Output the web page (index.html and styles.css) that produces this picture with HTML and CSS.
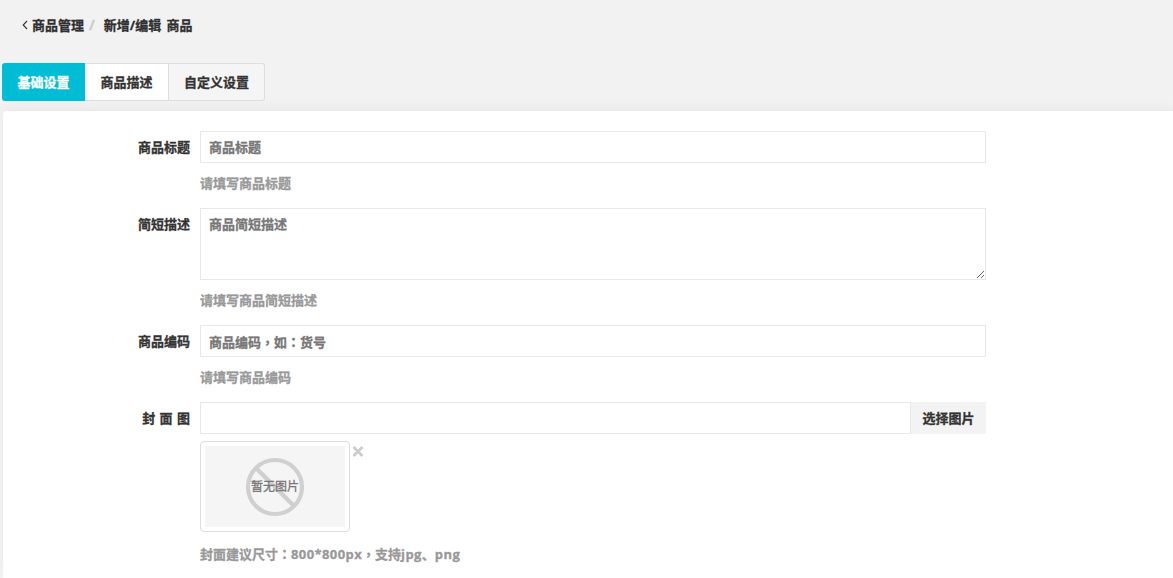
FILE: index.html
```html
<!DOCTYPE html>
<html lang="zh-CN">
<head>
<meta charset="utf-8">
<title>新增/编辑 商品</title>
<link rel="stylesheet" href="styles.css">
</head>
<body>
<nav class="crumbs">
  <svg class="back" width="6" height="10" viewBox="0 0 6 10"><path d="M5 1 1.2 5 5 9" fill="none" stroke="#333" stroke-width="1.1"/></svg>
  <span class="crumb">商品管理</span>
  <span class="sep">/</span>
  <span class="crumb">新增/编辑 商品</span>
</nav>
<div class="tabs">
  <a class="tab active">基础设置</a>
  <a class="tab white">商品描述</a>
  <a class="tab last">自定义设置</a>
</div>
<main class="panel">
  <div class="row">
    <label class="label">商品标题</label>
    <div class="field">
      <input class="control" placeholder="商品标题">
      <p class="hint">请填写商品标题</p>
    </div>
  </div>
  <div class="row">
    <label class="label">简短描述</label>
    <div class="field">
      <textarea class="control area" placeholder="商品简短描述"></textarea>
      <p class="hint">请填写商品简短描述</p>
    </div>
  </div>
  <div class="row">
    <label class="label">商品编码</label>
    <div class="field">
      <input class="control tc" lang="zh-TW" placeholder="商品编码，如：货号">
      <p class="hint">请填写商品编码</p>
    </div>
  </div>
  <div class="row">
    <label class="label spaced">封 面 图</label>
    <div class="field">
      <div class="group">
        <input class="control grow">
        <button class="pick" type="button">选择图片</button>
      </div>
      <div class="thumb-line">
        <div class="thumb">
          <div class="placeholder">
            <svg class="no" width="60" height="60" viewBox="0 0 60 60"><circle cx="30" cy="30" r="27" fill="none" stroke="#d0d0d0" stroke-width="4.2"/><path d="M11 11 49 49" stroke="#d0d0d0" stroke-width="4.2"/></svg>
            <span class="none-text">暂无图片</span>
          </div>
        </div>
        <svg class="remove" width="12" height="11" viewBox="0 0 12 11"><path d="M1.5 1 10.5 10M10.5 1 1.5 10" stroke="#ccc" stroke-width="2.6"/></svg>
      </div>
      <p class="hint cover">封面建议尺寸<span class="tc" lang="zh-TW">：</span><span class="latin">800*800px</span><span class="tc" lang="zh-TW">，</span>支持<span class="latin">jpg</span>、<span class="latin">png</span></p>
    </div>
  </div>
</main>
</body>
</html>
```
FILE: styles.css
```css
* { box-sizing: border-box; }
html, body { margin: 0; height: 578px; overflow: hidden; }
body {
  background: #f2f2f2;
  font: bold 13px/18px "Open Sans", "Noto Sans CJK SC", "Liberation Sans", sans-serif;
  color: #333;
  -webkit-text-stroke: .3px;
}
.crumbs {
  display: flex;
  align-items: center;
  height: 18px;
  margin: 16px 0 0 22px;
}
.back { margin-right: 4px; }
.crumb { color: #2f2f2f; word-spacing: 2px; }
.sep { color: #ccc; margin: 0 9px 0 5px; font-size: 14px; }
.tabs {
  display: flex;
  width: 263px;
  height: 38px;
  margin: 29px 0 0 2px;
}
.tab {
  display: flex;
  align-items: center;
  justify-content: center;
  border: 1px solid #ddd;
  border-left: 0;
  background: #fff;
  color: #333;
}
.active {
  width: 83px;
  background: #00bcd4;
  border: 0;
  border-radius: 3px 0 0 3px;
  color: #fff;
}
.white { width: 84px; }
.last {
  width: 96px;
  background: #f5f5f5;
  border-radius: 0 3px 3px 0;
}
.panel {
  margin: 10px 0 0 3px;
  height: 467px;
  padding-top: 20px;
  background: #fff;
  border-radius: 4px 0 0 0;
  box-shadow: 0 -5px 10px rgba(0, 0, 0, .035);
}
.row { display: flex; }
.label {
  width: 197px;
  padding-right: 10px;
  text-align: right;
  line-height: 32px;
  color: #333;
  flex: none;
}
.spaced { word-spacing: 1px; }
.field { width: 786px; flex: none; }
.control {
  display: block;
  width: 100%;
  height: 32px;
  border: 1px solid #e8e8e8;
  padding: 0 8px;
  background: #fff;
  font: inherit;
  color: #333;
  outline: 0;
  border-radius: 0;
}
.control::placeholder { color: #777; opacity: 1; }
.area { height: 72px; padding: 6px 8px; resize: vertical; }
.tc { font-family: "Noto Sans CJK TC", sans-serif; }
.latin { letter-spacing: .4px; }
.hint {
  margin: 11px 0 16px;
  height: 18px;
  color: #999;
}
.group { display: flex; }
.grow { flex: 1; width: auto; }
.pick {
  width: 75px;
  height: 32px;
  border: 0;
  padding: 0;
  background: #f3f3f3;
  font: inherit;
  color: #333;
}
.thumb-line { display: flex; align-items: flex-start; margin-top: 7px; }
.thumb {
  width: 150px;
  height: 91px;
  padding: 4px;
  border: 1px solid #ddd;
  border-radius: 4px;
  background: #fff;
}
.placeholder {
  position: relative;
  display: flex;
  align-items: center;
  justify-content: center;
  height: 81px;
  background: #f5f5f5;
}
.no { display: block; }
.none-text {
  position: absolute;
  left: 0;
  right: 0;
  top: 32px;
  text-align: center;
  font-size: 12px;
  font-weight: normal;
  color: #777;
}
.remove { margin: 5px 0 0 2px; }
.hint.cover { margin: 13px 0 0; }
```
